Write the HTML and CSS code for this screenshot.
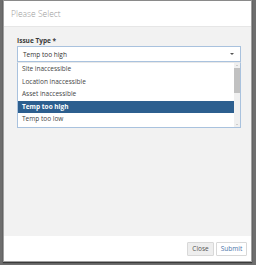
FILE: index.html
```html
<!DOCTYPE html>
<html>
<head>
<meta charset="utf-8">
<link rel="stylesheet" href="styles.css">
</head>
<body>
<div class="modal">
  <div class="modal-header">Please Select</div>
  <div class="modal-body">
    <div class="label">Issue Type *</div>
    <div class="select">
      <span class="select-text">Temp too high</span>
      <span class="arrow"></span>
    </div>
    <div class="list">
      <div class="options">
        <div class="opt">Site inaccessible</div>
        <div class="opt">Location inaccessible</div>
        <div class="opt">Asset inaccessible</div>
        <div class="opt selected">Temp too high</div>
        <div class="opt">Temp too low</div>
      </div>
      <div class="scrollbar">
        <div class="sb-arrow up"></div>
        <div class="sb-track"><div class="sb-thumb"></div></div>
        <div class="sb-arrow down"></div>
      </div>
    </div>
  </div>
  <div class="modal-footer">
    <button class="btn btn-close">Close</button>
    <button class="btn btn-submit">Submit</button>
  </div>
</div>
</body>
</html>
```
FILE: styles.css
```css
html, body {
  margin: 0;
  padding: 0;
  height: 265px;
  background: #6e6e6e;
  font-family: "Open Sans", "Noto Sans", sans-serif;
  overflow: hidden;
}
.modal {
  margin-left: 3px;
  width: 247px;
  height: 260px;
  border: 1px solid #a0a0a0;
  border-top-color: #8a8a8a;
  background: #fff;
  display: flex;
  flex-direction: column;
  box-shadow: 0 1px 1px #3a3a3a;
}
.modal-header {
  height: 25px;
  border-bottom: 1px solid #e6e6e6;
  padding-left: 7px;
  display: flex;
  align-items: center;
  font-size: 8.5px;
  font-weight: 300;
  color: #9a9a9a;
}
.modal-body {
  flex: 1;
  background: #f2f2f2;
  padding: 8px 10px 0 13px;
}
.label {
  font-size: 6.5px;
  font-weight: 700;
  color: #3a3a3a;
  height: 11px;
  line-height: 11px;
}
.select {
  height: 14px;
  border: 1px solid #a9c2de;
  background: #fff;
  display: flex;
  align-items: center;
  justify-content: space-between;
  padding: 0 6px 0 5px;
  font-size: 6.5px;
  color: #333;
}
.arrow {
  width: 0;
  height: 0;
  border-left: 2px solid transparent;
  border-right: 2px solid transparent;
  border-top: 2.5px solid #555;
}
.list {
  height: 64px;
  border: 1px solid #a9c2de;
  border-top: 1px solid #e8e8e8;
  background: #fff;
  display: flex;
}
.options {
  flex: 1;
  display: flex;
  flex-direction: column;
}
.opt {
  height: 12.6px;
  line-height: 12.6px;
  padding-left: 4px;
  font-size: 6.5px;
  color: #444;
}
.opt.selected {
  background: #2d5f8f;
  color: #fff;
  font-weight: 700;
}
.scrollbar {
  width: 6px;
  background: #f0f0f0;
  display: flex;
  flex-direction: column;
}
.sb-arrow {
  height: 5px;
  display: flex;
  align-items: center;
  justify-content: center;
}
.sb-arrow.up::after, .sb-arrow.down::after {
  content: "";
  width: 0;
  height: 0;
  border-left: 1.5px solid transparent;
  border-right: 1.5px solid transparent;
}
.sb-arrow.up::after { border-bottom: 1.5px solid #aaa; }
.sb-arrow.down::after { border-top: 1.5px solid #aaa; }
.sb-track {
  flex: 1;
}
.sb-thumb {
  height: 25px;
  background: #c1c1c1;
}
.modal-footer {
  height: 25px;
  display: flex;
  align-items: center;
  justify-content: flex-end;
  gap: 2px;
  padding-right: 4px;
}
.btn {
  height: 14px;
  padding: 0 3px;
  font-family: "Open Sans", "Noto Sans", sans-serif;
  font-size: 6.5px;
  border: 1px solid #d8d8d8;
  border-radius: 1px;
  margin: 0;
}
.btn-close {
  width: 27px;
  background: #eeeeee;
  color: #555;
}
.btn-submit {
  width: 31px;
  background: #fff;
  color: #4a72a8;
}
```
